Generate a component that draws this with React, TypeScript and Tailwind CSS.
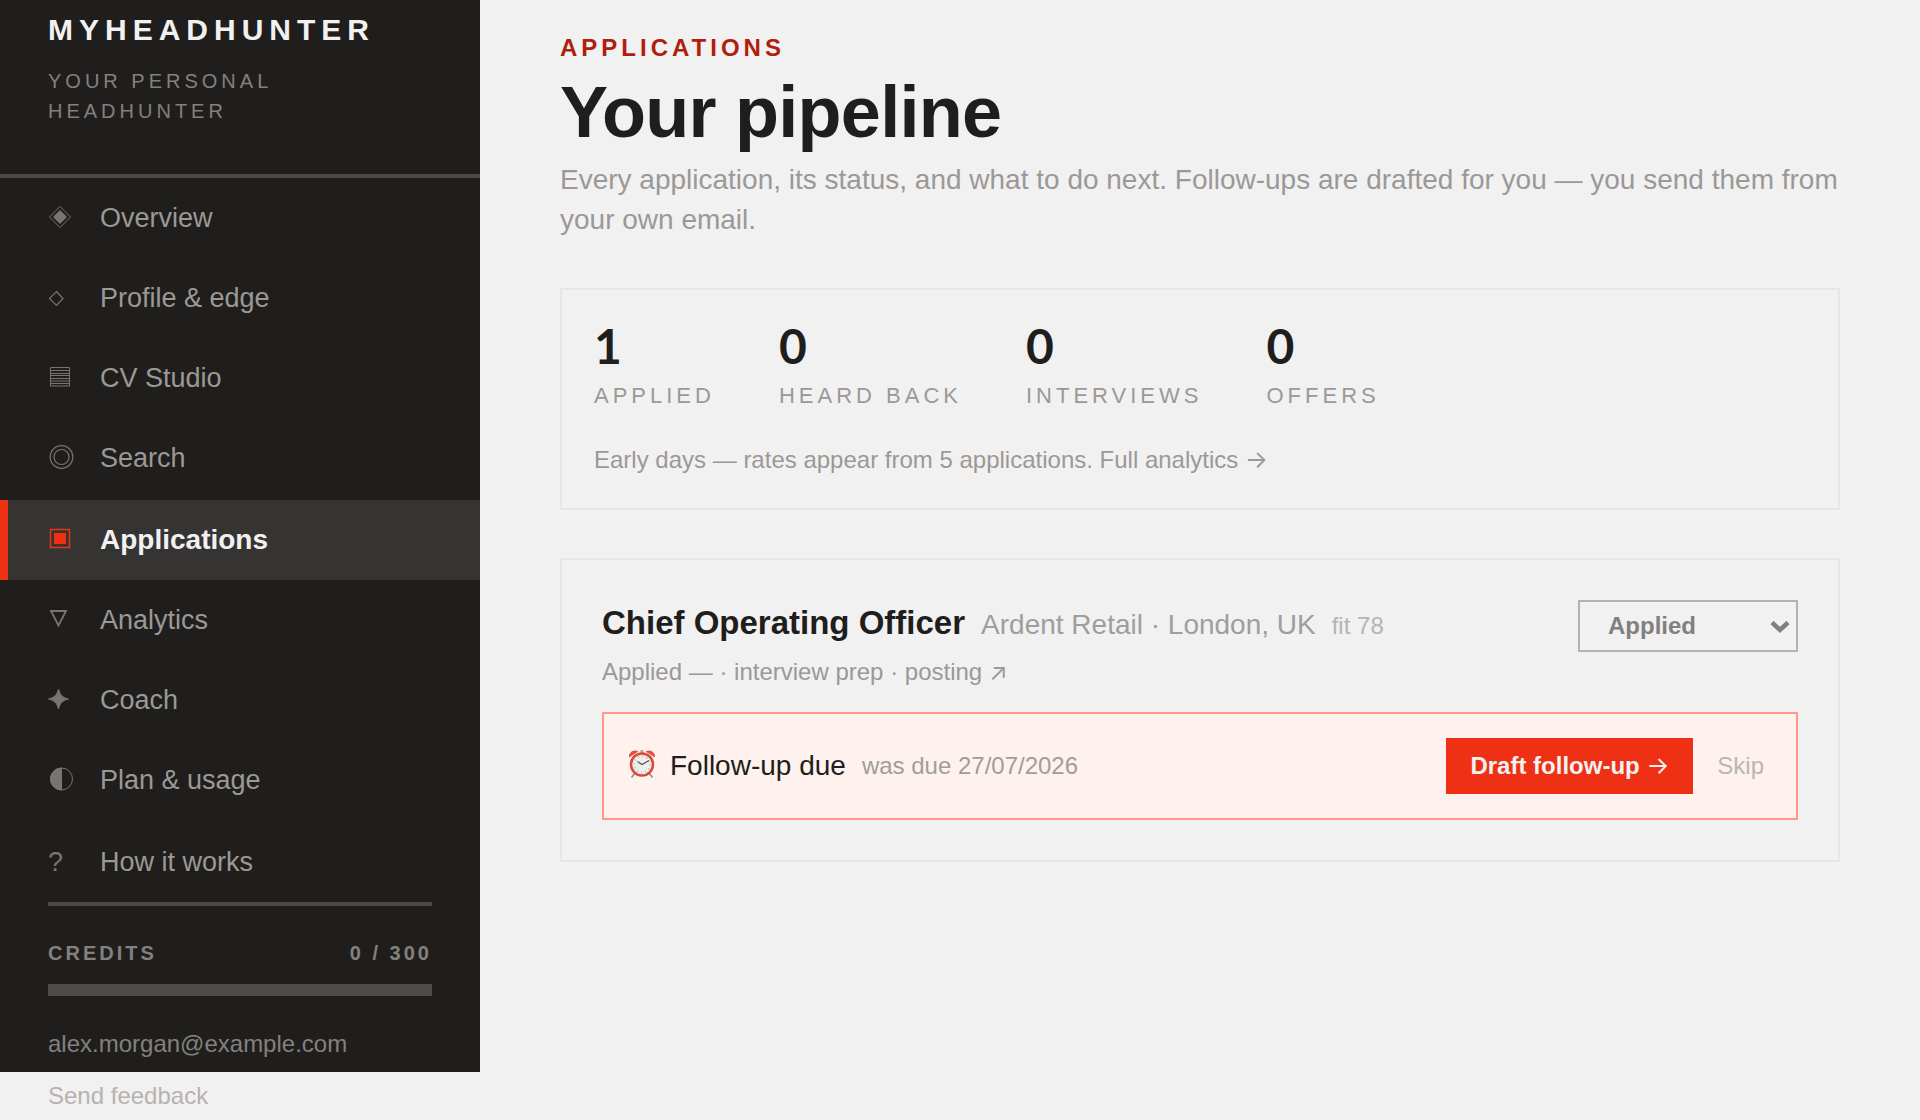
import type { ReactNode } from "react";

type NavItem = { label: string; icon: ReactNode; active?: boolean; tall?: boolean };

function Glyph({ children }: { children: ReactNode }) {
  return (
    <svg viewBox="0 0 26 26" className="h-[26px] w-[26px] shrink-0" fill="none" stroke="currentColor" aria-hidden="true">
      {children}
    </svg>
  );
}

const navItems: NavItem[] = [
  {
    label: "Overview",
    icon: (
      <Glyph>
        <path d="M12 1.500 22.500 12 12 22.500 1.500 12Z" />
        <path d="M12 5 19 12 12 19 5 12Z" fill="currentColor" stroke="none" />
      </Glyph>
    ),
  },
  {
    label: "Profile & edge",
    icon: (
      <Glyph>
        <path d="M8.500 6.500 15 13.500 8.500 20.500 1.500 13.500Z" strokeWidth="1.200" />
      </Glyph>
    ),
  },
  {
    label: "CV Studio",
    icon: (
      <Glyph>
        <path d="M2.500 2.500h19v18.500h-19zM2.500 5.500h19M2.500 8.500h19M2.500 10.500h19M2.500 13.500h19M2.500 16h19M2.500 18.500h19" />
      </Glyph>
    ),
  },
  {
    label: "Search",
    tall: true,
    icon: (
      <Glyph>
        <circle cx="13.5" cy="12" r="11.3" strokeWidth="1.200" />
        <circle cx="13.5" cy="12" r="7.5" strokeWidth="1.200" />
      </Glyph>
    ),
  },
  {
    label: "Applications",
    active: true,
    icon: (
      <Glyph>
        <path d="M2.500 2.500h19v18h-19z" strokeWidth="1.500" />
        <path d="M6 6h12v11H6z" fill="currentColor" stroke="none" />
      </Glyph>
    ),
  },
  {
    label: "Analytics",
    icon: (
      <Glyph>
        <path d="M3 4h15L10.500 18.500Z" strokeWidth="1.800" />
      </Glyph>
    ),
  },
  {
    label: "Coach",
    icon: (
      <Glyph>
        <path d="M10.500 2C12 8 14.500 10.500 20.500 12 14.500 13.500 12 16 10.500 22 9 16 6.500 13.500.500 12 6.500 10.500 9 8 10.500 2Z" fill="currentColor" />
      </Glyph>
    ),
  },
  {
    label: "Plan & usage",
    tall: true,
    icon: (
      <Glyph>
        <circle cx="13.5" cy="12" r="11" />
        <path d="M13.500 1a11 11 0 0 0 0 22Z" fill="currentColor" />
      </Glyph>
    ),
  },
  { label: "How it works", icon: "?" },
];

const stats = [
  { value: 1, label: "APPLIED" },
  { value: 0, label: "HEARD BACK" },
  { value: 0, label: "INTERVIEWS" },
  { value: 0, label: "OFFERS" },
];

function Arrow({ children }: { children: string }) {
  return <span className="font-['Inter',sans-serif] font-normal">{children}</span>;
}

function NavLink({ item }: { item: NavItem }) {
  const tone = item.active
    ? "border-[#ee3014] bg-[#363432] text-[28px] font-bold text-[#f1f1f1]"
    : "border-transparent text-[27px] text-[#9b9996]";
  const height = item.tall ? "h-[82px] pb-0.5" : "h-20";
  return (
    <li>
      <a
        href="#"
        aria-current={item.active ? "page" : undefined}
        className={`flex items-center gap-[26px] border-l-8 pl-10 leading-10 ${tone} ${height}`}
      >
        <span className={`w-[26px] shrink-0 ${item.active ? "text-[#ee3014]" : "text-[#777572]"}`}>{item.icon}</span>
        {item.label}
      </a>
    </li>
  );
}

function Sidebar() {
  return (
    <aside className="w-[480px] shrink-0">
      <div className="bg-[#201e1c] pb-2">
        <div className="border-b-4 border-[#4d4b48] px-12 pt-2 pb-12">
          <div className="text-[30px] leading-[44px] font-bold tracking-[6px] text-[#f1f1f1]">MYHEADHUNTER</div>
          <p className="mt-3.5 text-[20px] leading-[30px] tracking-[4px] text-[#83817e]">YOUR PERSONAL HEADHUNTER</p>
        </div>
        <nav aria-label="Main">
          <ul>
            {navItems.map((item) => (
              <NavLink key={item.label} item={item} />
            ))}
          </ul>
        </nav>
        <div className="mx-12 border-t-4 border-[#4d4b48] pt-8">
          <div className="flex justify-between text-[20px] leading-[30px] font-bold tracking-[3px] text-[#83817e]">
            <span>CREDITS</span>
            <span>0 / 300</span>
          </div>
          <div role="progressbar" aria-label="Credits" aria-valuenow={0} aria-valuemin={0} aria-valuemax={300} className="mt-4 h-3 bg-[#4d4b48]" />
          <p className="mt-7 text-[24px] leading-10 text-[#83817e]">alex.morgan@example.com</p>
        </div>
      </div>
      <a href="#" className="ml-12 inline-block pt-1 text-[24px] leading-10 text-[#b8b1af]">
        Send feedback
      </a>
    </aside>
  );
}

function StatsCard() {
  return (
    <section aria-label="Pipeline totals" className="mt-12 border-2 border-[#e7e7e7] px-8 pt-8 pb-7">
      <dl className="flex gap-16">
        {stats.map((stat) => (
          <div key={stat.label} className="flex flex-col-reverse">
            <dt className="text-[22px] leading-9 tracking-[4px] text-[#9c9896]">{stat.label}</dt>
            <dd className="mb-2 font-['Lato',sans-serif] text-[48px] leading-[48px] font-bold">{stat.value}</dd>
          </div>
        ))}
      </dl>
      <p className="mt-[26px] text-[24px] leading-10 text-[#9c9896]">
        Early days — rates appear from 5 applications.{" "}
        <a href="#">
          Full analytics <Arrow>→</Arrow>
        </a>
      </p>
    </section>
  );
}

function AlarmClock() {
  return (
    <svg viewBox="0 0 28 30" className="mb-1 h-[30px] w-7 shrink-0" aria-hidden="true">
      <path d="M7 24 3.500 28.500M21 24l3.500 4.500" stroke="#8b8886" strokeWidth="1.500" />
      <path d="M1 8.500C.500 3 6 0 10.500 2.500ZM27 8.500C27.500 3 22 0 17.500 2.500Z" fill="#e2503f" />
      <path d="M12.500 1h3v3h-3z" fill="#a8a5a3" />
      <circle cx="14" cy="15.500" r="11" fill="#efedeb" stroke="#d94a38" strokeWidth="2.500" />
      <circle cx="14" cy="15.500" r="8" fill="none" stroke="#bdb9b7" strokeWidth="2" strokeDasharray="1 3.190" />
      <path d="M9.500 12.500 14 15.500l7-4" fill="none" stroke="#55524f" strokeWidth="1.200" />
    </svg>
  );
}

function ApplicationCard() {
  return (
    <article className="mt-12 border-2 border-[#e7e7e7] p-10">
      <div className="flex items-start justify-between gap-6">
        <div>
          <div className="flex items-baseline gap-4">
            <h2 className="text-[33px] leading-[46px] font-bold">Chief Operating Officer</h2>
            <span className="text-[28px] leading-10 text-[#a19d9b]">Ardent Retail · London, UK</span>
            <span className="text-[24px] leading-10 text-[#b8b4b2]">fit 78</span>
          </div>
          <p className="mt-1.5 text-[24px] leading-10 text-[#9c9896]">
            Applied — · <a href="#">interview prep</a> ·{" "}
            <a href="#">
              posting <Arrow>↗</Arrow>
            </a>
          </p>
        </div>
        <div className="relative">
          <select
            aria-label="Application status"
            className="h-[52px] w-[220px] appearance-none border-2 border-[#b7b2b1] bg-transparent px-7 text-[24px] font-bold text-[#82807d]"
          >
            <option>Applied</option>
          </select>
          <svg viewBox="0 0 20 14" className="pointer-events-none absolute top-5 right-2 h-3.5 w-5" fill="none" stroke="#82807d" strokeWidth="4.500" aria-hidden="true">
            <path d="M2 2.500 10 10 18 2.500" />
          </svg>
        </div>
      </div>
      <div className="mt-5 flex items-center justify-between border-2 border-[#ff9985] bg-[#fff1ee] p-6">
        <div className="flex items-center gap-4">
          <div className="flex items-center gap-3.5 text-[28px] leading-10">
            <AlarmClock />
            Follow-up due
          </div>
          <span className="text-[24px] text-[#a19d9b]">was due 27/07/2026</span>
        </div>
        <div className="flex items-center gap-6">
          <button type="button" className="h-14 bg-[#ee3014] px-6 text-[24px] font-bold text-[#f1f1f1]">
            Draft follow-up <Arrow>→</Arrow>
          </button>
          <button type="button" className="pr-2 text-[24px] text-[#b8b6b4]">
            Skip
          </button>
        </div>
      </div>
    </article>
  );
}

export default function App() {
  return (
    <div className="flex min-h-screen bg-[#f1f1f1] font-['Liberation_Sans',Arial,sans-serif] text-[#201e1c]">
      <Sidebar />
      <main className="min-w-0 flex-1 px-20 pt-7 pb-12">
        <p className="text-[24px] leading-10 font-bold tracking-[4px] text-[#b01e0c]">APPLICATIONS</p>
        <h1 className="mt-1 text-[72px] leading-[80px] font-bold tracking-[-0.01em]">Your pipeline</h1>
        <p className="mt-2 text-[28px] leading-10 text-[#9c9896]">
          Every application, its status, and what to do next. Follow-ups are drafted for you — you send them from your own email.
        </p>
        <StatsCard />
        <ApplicationCard />
      </main>
    </div>
  );
}
